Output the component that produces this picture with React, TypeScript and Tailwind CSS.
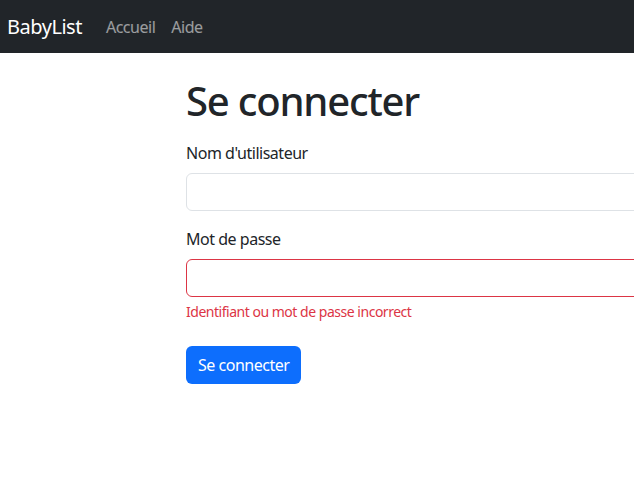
const font = { fontFamily: '"Noto Sans", "Open Sans", sans-serif' };

const Navbar = () => (
  <nav className="h-[53px] bg-[#212529] flex items-center pl-[7px] tracking-[-0.03em]">
    <span className="text-[20px] leading-[30px] text-white mr-4">BabyList</span>
    <ul className="flex items-center">
      <li className="px-2 text-[16px] text-white/55">Accueil</li>
      <li className="px-2 text-[16px] text-white/55">Aide</li>
    </ul>
  </nav>
);

const Field = ({ label, invalid }: { label: string; invalid?: boolean }) => (
  <div className="flex flex-col">
    <label className="text-[16px] leading-[24px] text-[#212529] mb-2">{label}</label>
    <input
      type={invalid ? 'password' : 'text'}
      className={
        invalid
          ? 'h-[38px] w-[700px] rounded-[6px] border border-[#dc3545] bg-white px-3 outline-none'
          : 'h-[38px] w-[700px] rounded-[6px] border border-[#dee2e6] bg-white px-3 outline-none'
      }
    />
  </div>
);

const App = () => (
  <div className="min-h-[478px] w-[634px] overflow-hidden bg-white" style={font}>
    <Navbar />
    <main className="pl-[186px] pt-6 tracking-[-0.03em]">
      <h1 className="text-[40px] leading-[48px] font-medium tracking-[-0.03em] text-[#212529] mb-4">
        Se connecter
      </h1>
      <form className="flex flex-col">
        <div className="mb-4">
          <Field label="Nom d'utilisateur" />
        </div>
        <div className="mb-6">
          <Field label="Mot de passe" invalid />
          <div className="mt-1 text-[14px] leading-[21px] text-[#dc3545]">
            Identifiant ou mot de passe incorrect
          </div>
        </div>
        <div>
          <button
            type="button"
            className="h-[38px] rounded-[6px] bg-[#0d6efd] px-3 text-[16px] text-white"
          >
            Se connecter
          </button>
        </div>
      </form>
    </main>
  </div>
);

export default App;
